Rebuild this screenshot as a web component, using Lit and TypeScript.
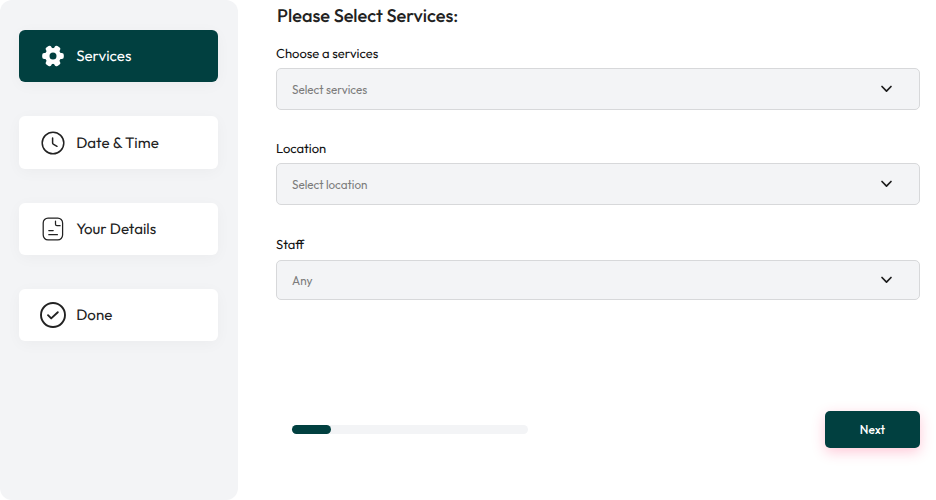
import { LitElement, html, css, svg } from "lit";
import { customElement } from "lit/decorators.js";
import { styleMap } from "lit/directives/style-map.js";

const icons = {
  gear: svg`<g fill="#fff">
    <circle cx="14" cy="14" r="5.8" fill="none" stroke="#fff" stroke-width="4.6"/>
    ${[0, 60, 120, 180, 240, 300].map((a) => svg`<rect x="18.6" y="10.9" width="6.2" height="6.2" rx="2" transform="rotate(${a} 14 14)"/>`)}
  </g>`,
  clock: svg`<g fill="none" stroke="#222" stroke-linecap="round" stroke-linejoin="round"><circle cx="14" cy="14" r="10.8" stroke-width="1.5"/><path stroke-width="1.5" d="M13.6 8.9v5.2c0 .5.2.9.6 1.1l3.8 2.1"/></g>`,
  note: svg`<g fill="none" stroke="#222" stroke-width="1.25" stroke-linecap="round" stroke-linejoin="round"><rect x="4.2" y="3.1" width="19.4" height="21.8" rx="4.8"/><path d="M16.5 6v3.3q0 1.4 1.4 1.4h3.2M9.8 15.5h4.4M9.8 19.7h8.6"/></g>`,
  check: svg`<g fill="none" stroke="#222" stroke-width="1.9" stroke-linecap="round" stroke-linejoin="round"><circle cx="14" cy="14" r="12"/><path d="M9 14.2l3.2 3.2 6.6-6.2"/></g>`,
};

const steps = [
  { icon: icons.gear, text: "Services", active: true },
  { icon: icons.clock, text: "Date & Time", active: false },
  { icon: icons.note, text: "Your Details", active: false },
  { icon: icons.check, text: "Done", active: false },
];

const fields = [
  { label: "Choose a services", value: "Select services" },
  { label: "Location", value: "Select location" },
  { label: "Staff", value: "Any" },
];

@customElement("app-root")
export class AppRoot extends LitElement {
  static styles = css`
    :host {
      display: flex;
      box-sizing: border-box;
      height: 500px;
      overflow: hidden;
      background: #fff;
      color: #222;
      font-family: Outfit, Lato, sans-serif;
      text-rendering: geometricPrecision;
    }
    * { box-sizing: border-box; }
    svg { display: block; flex: none; }
    .sidebar {
      flex: none;
      width: 238px;
      padding: 30px 20px 30px 19px;
      border-radius: 12px;
      background: #f3f4f6;
      display: flex;
      flex-direction: column;
      gap: 34px;
    }
    .step {
      height: 52.35px;
      display: flex;
      align-items: center;
      gap: 9.2px;
      padding-left: 20px;
      border-radius: 6px;
      background: #fff;
      box-shadow: 0 3px 15px rgba(0, 0, 0, 0.035);
      font-size: 15.1px;
      font-weight: 400;
      line-height: 20px;
      white-space: nowrap;
    }
    .step.active { background: #014040; color: #fff; }
    .main { flex: 1; padding: 4px 16px 0 38px; }
    .title {
      margin: 0 0 0 1px;
      font-size: 18.2px;
      line-height: 24px;
      font-weight: 480;
      white-space: nowrap;
    }
    .fields {
      margin-top: 16px;
      height: 256px;
      display: grid;
      grid-template-rows: 95px 96px 65px;
    }
    .label {
      display: block;
      height: 24px;
      line-height: 20px;
      font-size: 13px;
      color: #111;
    }
    .select {
      width: 100%;
      height: 42px;
      padding: 1px 26px 0 15px;
      display: flex;
      align-items: center;
      justify-content: space-between;
      border: 1px solid #d7d8da;
      border-radius: 5px;
      background: #f3f4f6;
      color: #7c7c7c;
      font: inherit;
      font-size: 11.7px;
    }
    .field:last-child .label { height: 25px; }
    .field:last-child .select { height: 40px; }
    .chevron { margin-top: -2px; }
    .footer {
      margin-top: 111px;
      display: flex;
      align-items: center;
      justify-content: space-between;
      padding-left: 16px;
    }
    .track { width: 236px; height: 9px; border-radius: 5px; background: #f3f4f6; }
    .bar { height: 9px; border-radius: 5px; background: #014040; }
    .next {
      width: 95px;
      height: 36.5px;
      padding: 1px 0 0;
      border: 0;
      border-radius: 5px;
      background: #014040;
      color: #fff;
      font: inherit;
      font-size: 12px;
      font-weight: 480;
      box-shadow: 0 4px 13px rgba(255, 40, 100, 0.25);
    }
  `;

  render() {
    return html`
      <nav class="sidebar">
        ${steps.map((s) => html`
          <div class="step ${s.active ? "active" : ""}">
            <svg width="28" height="28" viewBox="0 0 28 28">${s.icon}</svg>
            <span>${s.text}</span>
          </div>`)}
      </nav>
      <main class="main">
        <h1 class="title">Please Select Services:</h1>
        <div class="fields">
          ${fields.map((f) => html`
            <div class="field">
              <span class="label">${f.label}</span>
              <button class="select">
                <span>${f.value}</span>
                <svg class="chevron" width="13" height="10" viewBox="0 0 13 10">
                  <path d="M2 2.5l4.5 4.6L11 2.5" fill="none" stroke="#1c1c1c" stroke-width="1.7" stroke-linecap="round" stroke-linejoin="round"/>
                </svg>
              </button>
            </div>`)}
        </div>
        <div class="footer">
          <div class="track"><div class="bar" style=${styleMap({ width: `${(1 / 6) * 100}%` })}></div></div>
          <button class="next">Next</button>
        </div>
      </main>
    `;
  }
}
